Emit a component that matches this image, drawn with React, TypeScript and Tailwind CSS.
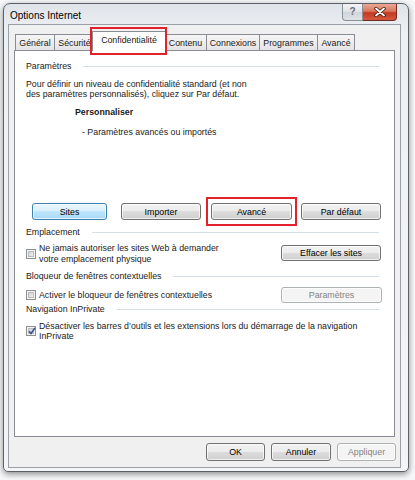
import React from "react";

type BtnKind = "normal" | "hover" | "disabled";

const Btn = ({
  label,
  kind = "normal",
  className = "",
}: {
  label: string;
  kind?: BtnKind;
  className?: string;
}) => {
  const look =
    kind === "hover"
      ? "border-[#3c7fb1] bg-[linear-gradient(#eaf6fd_0%,#d9f0fc_50%,#bee6fd_50%,#a7d9f5_100%)] text-black"
      : kind === "disabled"
      ? "border-[#adb2b5] bg-[#f4f4f4] text-[#838383]"
      : "border-[#707070] bg-[linear-gradient(#f2f2f2_0%,#ebebeb_50%,#dddddd_50%,#cfcfcf_100%)] text-black";
  return (
    <div
      className={`flex shrink-0 items-center justify-center rounded-[3px] border shadow-[inset_0_0_0_1px_rgba(255,255,255,0.7)] ${look} ${className}`}
    >
      {label}
    </div>
  );
};

const Check = ({ checked = false }: { checked?: boolean }) => (
  <span className="relative flex h-[10px] w-[10px] shrink-0 items-center justify-center border border-[#8e8f8f] bg-[#f4f4f4]">
    <span className="h-[6px] w-[6px] border border-[#b9bcc0] bg-[linear-gradient(135deg,#cbcfd4,#f2f3f5)]" />
    {checked && (
      <svg className="absolute left-[1px] top-[0px]" width="8" height="8" viewBox="0 0 8 8">
        <path d="M1 4.2 L3 6.5 L7 1" fill="none" stroke="#3b4f8c" strokeWidth="1.6" />
      </svg>
    )}
  </span>
);

const GroupHeader = ({ label, className = "" }: { label: string; className?: string }) => (
  <div className={`flex h-[10px] items-center pr-[15px] ${className}`}>
    <span>{label}</span>
    <span className="ml-[12px] h-px flex-1 bg-[#d5dfe5]" />
  </div>
);

const Tab = ({ label, w, selected = false }: { label: string; w: string; selected?: boolean }) =>
  selected ? (
    <div
      className={`relative z-10 -mx-[2px] -mb-px flex h-[20px] shrink-0 items-start justify-center border border-b-0 border-[#898c95] bg-white pt-[3px] ${w}`}
    >
      {label}
      {/* highlight box */}
      <span className="absolute -left-[3px] -right-[2px] -top-[5px] -bottom-[4px] border-2 border-[#e3212a]" />
    </div>
  ) : (
    <div
      className={`-mr-px flex h-[16px] shrink-0 items-center justify-center border border-b-0 border-[#898c95] bg-[linear-gradient(#f6f6f6,#e4e4e4)] ${w}`}
    >
      {label}
    </div>
  );

export default function App() {
  return (
    <div className="h-[480px] w-[415px] overflow-hidden bg-[#f6f8fa] pl-[3px] pt-[3px] font-['Liberation_Sans',Arial,sans-serif] text-[8.8px] leading-[10px] text-[#1a1a1a]">
      <div className="flex h-[469px] w-[406px] flex-col rounded-b-[5px] rounded-t-[7px] border border-[#5d6166] bg-[linear-gradient(#dfe4ea,#eef1f4_30px,#f3f4f6)] shadow-[0_2px_6px_rgba(0,0,0,0.45)]">
        {/* title bar */}
        <div className="flex h-[20px] shrink-0 items-start">
          <span className="ml-[6px] mt-[6px] text-[10px] leading-[12px] text-black">Options Internet</span>
          <div className="ml-auto mr-[11px] flex">
            <div className="flex h-[17px] w-[21px] items-center justify-center rounded-bl-[4px] border border-t-0 border-[#8b9096] bg-[linear-gradient(#f3f4f6,#dfe3e7_50%,#cfd4da_50%,#dfe4e9)] text-[10px] font-bold text-[#6b7078]">
              ?
            </div>
            <div className="flex h-[17px] w-[34px] items-center justify-center rounded-br-[4px] border border-l-0 border-t-0 border-[#6c2a20] bg-[linear-gradient(#eaa895,#d9785f_45%,#c4391f_55%,#d5593f)]">
              <svg width="12" height="10" viewBox="0 0 12 10">
                <path d="M2 1.5 L10 8.5 M10 1.5 L2 8.5" stroke="#3d1810" strokeWidth="3.4" strokeLinecap="round" />
                <path d="M2 1.5 L10 8.5 M10 1.5 L2 8.5" stroke="#ffffff" strokeWidth="1.8" strokeLinecap="round" />
              </svg>
            </div>
          </div>
        </div>

        {/* dialog body */}
        <div className="ml-[4px] flex h-[444px] w-[393px] flex-col border border-[#9aa0a6] bg-[#f0f0f0] pl-[5px]">
          {/* tabs */}
          <div className="mt-[6px] flex h-[19px] shrink-0 items-end pl-[1px]">
            <Tab label="Général" w="w-[40px]" />
            <Tab label="Sécurité" w="w-[41px]" />
            <Tab label="Confidentialité" w="w-[74px]" selected />
            <Tab label="Contenu" w="w-[43px]" />
            <Tab label="Connexions" w="w-[54px]" />
            <Tab label="Programmes" w="w-[59px]" />
            <Tab label="Avancé" w="w-[38px]" />
          </div>

          {/* panel */}
          <div className="flex h-[387px] w-[381px] shrink-0 flex-col border border-[#898c95] bg-white pl-[11px]">
            <GroupHeader label="Paramètres" className="mt-[10px]" />
            <p className="mt-[8px]">
              Pour définir un niveau de confidentialité standard (et non
              <br />
              des paramètres personnalisés), cliquez sur Par défaut.
            </p>
            <p className="ml-[49px] mt-[8px] font-bold">Personnaliser</p>
            <p className="ml-[56px] mt-[10px]">- Paramètres avancés ou importés</p>

            <div className="mt-[66px] flex h-[17px] items-stretch">
              <Btn label="Sites" kind="hover" className="ml-[6px] w-[75px]" />
              <Btn label="Importer" className="ml-[14px] w-[80px]" />
              <div className="relative ml-[10px] flex">
                <Btn label="Avancé" className="w-[81px]" />
                <span className="absolute -bottom-[6px] -left-[5px] -right-[5px] -top-[6px] border-2 border-[#e3212a]" />
              </div>
              <Btn label="Par défaut" className="ml-[9px] w-[80px]" />
            </div>

            <GroupHeader label="Emplacement" className="mt-[7px]" />
            <div className="mt-[6px] flex h-[22px] items-start">
              <div className="flex items-center gap-[3px]">
                <Check />
                <p className="leading-[11px]">
                  Ne jamais autoriser les sites Web à demander
                  <br />
                  votre emplacement physique
                </p>
              </div>
              <Btn label="Effacer les sites" className="ml-auto mr-[13px] mt-[2px] h-[16px] w-[100px]" />
            </div>

            <GroupHeader label="Bloqueur de fenêtres contextuelles" className="mt-[6px]" />
            <div className="mt-[5px] flex h-[17px] items-center">
              <Check />
              <span className="ml-[3px]">Activer le bloqueur de fenêtres contextuelles</span>
              <Btn label="Paramètres" kind="disabled" className="ml-auto mr-[12px] h-[16px] w-[101px]" />
            </div>

            <GroupHeader label="Navigation InPrivate" className="mt-[1px]" />
            <div className="mt-[7px] flex items-center gap-[3px]">
              <Check checked />
              <p>
                Désactiver les barres d’outils et les extensions lors du démarrage de la navigation
                <br />
                InPrivate
              </p>
            </div>
          </div>

          {/* dialog buttons */}
          <div className="mt-[6px] flex h-[18px] justify-end gap-[6px] pr-[4px]">
            <Btn label="OK" className="w-[59px]" />
            <Btn label="Annuler" className="w-[60px]" />
            <Btn label="Appliquer" kind="disabled" className="w-[59px]" />
          </div>
        </div>
      </div>
    </div>
  );
}
